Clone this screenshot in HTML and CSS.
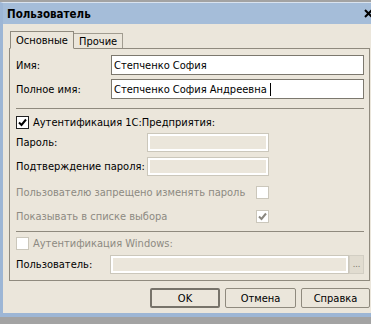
FILE: index.html
```html
<!DOCTYPE html>
<html lang="ru">
<head>
  <meta charset="UTF-8">
  <title>Пользователь</title>
  <link rel="stylesheet" href="styles.css">
</head>
<body>

  <div class="window">
    <div class="titlebar">
      <span class="title">Пользователь</span>
      <svg class="close" width="9" height="9" viewBox="0 0 9 9">
        <path d="M1 1 L8 8 M8 1 L1 8" stroke="#000" stroke-width="2"/>
      </svg>
    </div>

    <div class="content">
      <div class="tabs">
        <div class="tab active">Основные</div>
        <div class="tab">Прочие</div>
      </div>

      <div class="panel">
        <div class="row row-name">
          <span class="label lbl-short">Имя:</span>
          <div class="field">Степченко София</div>
        </div>
        <div class="row row-full">
          <span class="label lbl-short">Полное имя:</span>
          <div class="field">Степченко София Андреевна <span class="caret"></span></div>
        </div>

        <div class="sep sep-top"></div>

        <div class="row row-auth">
          <span class="check checked">
            <svg width="9" height="9" viewBox="0 0 9 9"><path d="M1 4.5 L3.5 7 L8 1.5" fill="none" stroke="#000" stroke-width="2"/></svg>
          </span>
          <span class="check-text">Аутентификация 1С:Предприятия:</span>
        </div>
        <div class="row row-pass">
          <span class="label lbl-long">Пароль:</span>
          <div class="field disabled"></div>
        </div>
        <div class="row row-confirm">
          <span class="label lbl-long">Подтверждение пароля:</span>
          <div class="field disabled"></div>
        </div>
        <div class="row row-forbid">
          <span class="label lbl-check muted">Пользователю запрещено изменять пароль</span>
          <span class="check dim"></span>
        </div>
        <div class="row row-show">
          <span class="label lbl-check muted">Показывать в списке выбора</span>
          <span class="check dim">
            <svg width="9" height="9" viewBox="0 0 9 9"><path d="M1 4.5 L3.5 7 L8 1.5" fill="none" stroke="#8a877f" stroke-width="2"/></svg>
          </span>
        </div>

        <div class="sep sep-bottom"></div>

        <div class="row row-win">
          <span class="check dim"></span>
          <span class="check-text muted">Аутентификация Windows:</span>
        </div>
        <div class="row row-user">
          <span class="label lbl-user">Пользователь:</span>
          <div class="field disabled field-user"></div>
          <span class="dots">...</span>
        </div>
      </div>

      <div class="buttons">
        <button class="btn btn-default btn-ok">OK</button>
        <button class="btn btn-cancel">Отмена</button>
        <button class="btn btn-help">Справка</button>
      </div>
    </div>
  </div>

</body>
</html>
```

FILE: styles.css
```css
* {
  box-sizing: border-box;
}

body {
  margin: 0;
  background: #a3a3a3;
  font-family: "DejaVu Sans Condensed", "DejaVu Sans", sans-serif;
  font-stretch: condensed;
  font-size: 11px;
  color: #000;
}

.window {
  margin-top: 2px;
  width: 371px;
  border-top: 1px solid #d9e3ef;
  border-left: 3px solid #9db6d5;
  border-bottom: 4px solid #9db6d5;
  box-shadow: 0 1px 0 #5f6368;
  background: #ebe6db;
}

.titlebar {
  height: 21px;
  background: #a5bdd9;
  display: flex;
  align-items: center;
  justify-content: space-between;
  padding: 0 0 0 4px;
}

.title {
  font-weight: bold;
  font-size: 11.5px;
}

.close {
  margin-right: -2px;
}

.content {
  padding: 7px 0 5px 6px;
}

/* tabs */

.tabs {
  display: flex;
  align-items: flex-end;
  padding-left: 1px;
  height: 17px;
}

.tab {
  height: 15px;
  padding: 0 5px;
  border-top: 1px solid #a19c90;
  border-right: 1px solid #a19c90;
  display: flex;
  align-items: center;
}

.tab.active {
  position: relative;
  z-index: 1;
  height: 18px;
  margin-bottom: -1px;
  width: 64px;
  border: 1px solid #8f8a7e;
  border-bottom: 1px solid #ebe6db;
  background: #ebe6db;
}

.panel {
  width: 361px;
  border: 1px solid #8f8a7e;
  padding: 0 5px 6px 6px;
}

/* rows */

.row {
  display: flex;
  align-items: center;
  height: 19px;
}

.row-name { margin-top: 6px; height: 20px; }
.row-full { margin-top: 4px; height: 20px; }
.row-auth { margin-top: 5px; height: 17px; }
.row-pass { margin-top: 2px; }
.row-confirm { margin-top: 5px; }
.row-forbid { margin-top: 7px; }
.row-show { margin-top: 5px; }
.row-win { margin-top: 2px; height: 18px; }
.row-user { margin-top: 3px; }

.label {
  flex: none;
}

.lbl-short { width: 95px; }
.lbl-long { width: 131px; }
.lbl-check { width: 240px; }
.lbl-user { width: 94px; }

.muted {
  color: #8d8a82;
}

.field {
  height: 100%;
  flex: 1;
  border: 1px solid #7c786e;
  background: #fff;
  padding: 0 2px;
  display: flex;
  align-items: center;
  white-space: pre;
}

.row-pass .field,
.row-confirm .field {
  flex: none;
  width: 122px;
}

.field.disabled {
  background: #ebe6db;
  border-color: #cbc7bb;
  box-shadow: inset 0 0 0 2px #fff;
}

.caret {
  width: 1px;
  height: 13px;
  background: #000;
}

.dots {
  width: 15px;
  height: 100%;
  flex: none;
  background: #e1dcd0;
  border: 1px solid #d2cec3;
  color: #77736a;
  font-size: 9px;
  text-align: center;
  line-height: 16px;
}

.sep {
  height: 1px;
  background: #8f8a7e;
}

.sep-top { margin-top: 9px; }
.sep-bottom { margin-top: 5px; }

/* checkboxes */

.check {
  width: 13px;
  height: 13px;
  flex: none;
  background: #fff;
  border: 1px solid #cbc7bb;
  display: flex;
  align-items: center;
  justify-content: center;
}

.check.checked {
  border-color: #222;
}

.check-text {
  margin-left: 4px;
}

/* buttons */

.buttons {
  width: 361px;
  display: flex;
  justify-content: flex-end;
  gap: 5px;
  margin-top: 7px;
}

.btn {
  height: 20px;
  background: #ebe6db;
  border: 1px solid #8f8a7e;
  border-radius: 2px;
  font-family: inherit;
  font-size: 11px;
  padding: 0;
  color: #000;
}

.btn-default {
  border: 2px solid #77736a;
}

.btn-ok { width: 70px; }
.btn-cancel { width: 71px; }
.btn-help { width: 69px; }
```
